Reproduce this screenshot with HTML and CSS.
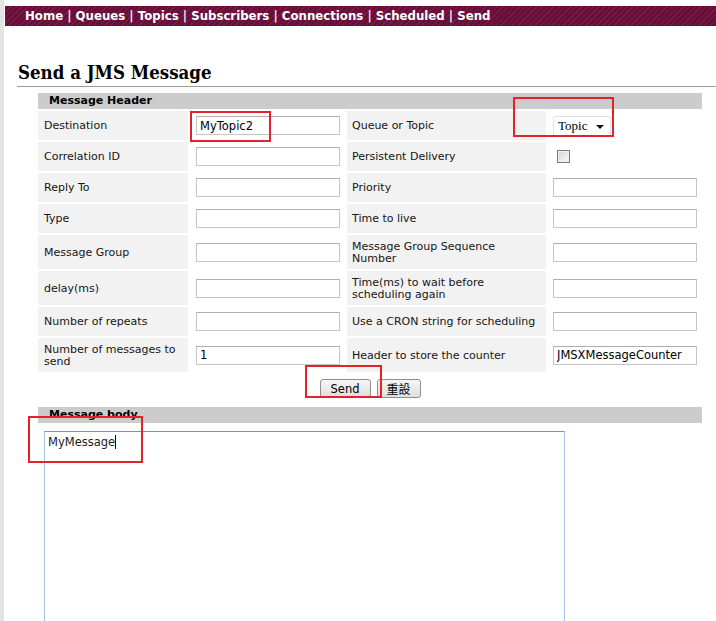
FILE: index.html
```html
<!DOCTYPE html>
<html>
<head>
<meta charset="utf-8">
<title>Send a JMS Message</title>
<link rel="stylesheet" href="styles.css">
</head>
<body>
<div class="page">
  <div class="topart"></div>
  <nav class="navbar">
    <a>Home</a> | <a>Queues</a> | <a>Topics</a> | <a>Subscribers</a> | <a>Connections</a> | <a>Scheduled</a> | <a>Send</a>
  </nav>
  <h2 class="title">Send a JMS Message</h2>
  <div class="rule"></div>

  <div class="form">
    <div class="bar">Message Header</div>
    <div class="grid">
      <div class="lbl">Destination</div>
      <div class="cell"><span class="mark-wrap"><input class="txt" value="MyTopic2"><span class="mark mark-dest"></span></span></div>
      <div class="lbl r">Queue or Topic</div>
      <div class="cell r"><span class="mark-wrap"><span class="select">Topic<span class="arrow"></span></span><span class="mark mark-topic"></span></span></div>

      <div class="lbl">Correlation ID</div>
      <div class="cell"><input class="txt"></div>
      <div class="lbl r">Persistent Delivery</div>
      <div class="cell r"><span class="check"></span></div>

      <div class="lbl">Reply To</div>
      <div class="cell"><input class="txt"></div>
      <div class="lbl r">Priority</div>
      <div class="cell r"><input class="txt"></div>

      <div class="lbl">Type</div>
      <div class="cell"><input class="txt"></div>
      <div class="lbl r">Time to live</div>
      <div class="cell r"><input class="txt"></div>

      <div class="lbl tall">Message Group</div>
      <div class="cell tall"><input class="txt"></div>
      <div class="lbl r tall">Message Group Sequence Number</div>
      <div class="cell r tall"><input class="txt"></div>

      <div class="lbl tall">delay(ms)</div>
      <div class="cell tall"><input class="txt"></div>
      <div class="lbl r tall">Time(ms) to wait before scheduling again</div>
      <div class="cell r tall"><input class="txt"></div>

      <div class="lbl">Number of repeats</div>
      <div class="cell"><input class="txt"></div>
      <div class="lbl r">Use a CRON string for scheduling</div>
      <div class="cell r"><input class="txt"></div>

      <div class="lbl tall">Number of messages to send</div>
      <div class="cell tall"><input class="txt" value="1"></div>
      <div class="lbl r tall">Header to store the counter</div>
      <div class="cell r tall"><input class="txt" value="JMSXMessageCounter"></div>
    </div>

    <div class="buttons">
      <span class="mark-wrap"><button class="btn btn-send">Send</button><span class="mark mark-send"></span></span>
      <button class="btn btn-reset">重設</button>
    </div>

    <div class="bar">Message body</div>
    <div class="body-area">
      <span class="mark-wrap"><span class="textarea"><span class="typed">MyMessage</span><span class="caret"></span></span><span class="mark mark-body"></span></span>
    </div>
  </div>
</div>
</body>
</html>
```

FILE: styles.css
```css
* { box-sizing: border-box; }
html, body { margin: 0; padding: 0; background: #fff; }
body { font-family: "DejaVu Sans", Verdana, sans-serif; font-size: 11px; color: #111; }

.page {
  min-height: 621px;
  border-style: solid;
  border-width: 0 0 0 4px;
  border-image: linear-gradient(to right, #e4e4e4, #b9b9b9, #d6d6d6) 1;
  overflow: hidden;
}

.topart { height: 6px; }

.navbar {
  margin-left: 1px;
  height: 20px;
  padding-left: 20px;
  line-height: 21px;
  font-size: 11.75px;
  font-weight: bold;
  color: #f2e6ec;
  white-space: nowrap;
  background-color: #6a0e39;
  background-image: repeating-linear-gradient(135deg, rgba(255,255,255,0.07) 0 1px, transparent 1px 4px);
}
.navbar a { color: #fff; }

.title {
  font-family: "DejaVu Serif Condensed", "DejaVu Serif", Georgia, serif;
  font-size: 18.5px;
  font-weight: bold;
  margin: 35px 0 0 14px;
  line-height: 24px;
  height: 24px;
  color: #000;
}
.rule {
  margin: 1px 0 0 13px;
  height: 1px;
  background: #9a9a9a;
}

.form {
  margin: 6px 0 0 34px;
  width: 664px;
}

.bar {
  height: 16px;
  background: #cccccc;
  font-weight: bold;
  padding-left: 11px;
  line-height: 16px;
  color: #000;
}

.grid {
  margin-top: 2px;
  display: grid;
  grid-template-columns: 150px 155px 199px 154px;
  column-gap: 2px;
  row-gap: 2px;
}
.lbl {
  background: #f2f2f2;
  height: 29px;
  padding: 1px 6px 0;
  display: flex;
  align-items: center;
  line-height: 12px;
  color: #151515;
}
.lbl.r { padding-left: 5px; }
.lbl.tall, .cell.tall { height: 34px; }
.cell {
  height: 29px;
  padding-left: 6px;
  display: flex;
  align-items: center;
}
.cell.r { padding-left: 5px; }

.txt {
  width: 144px;
  height: 19px;
  border: 1px solid #c6c6c6;
  border-top-color: #aeaeae;
  padding: 0 3px;
  margin: 0;
  font-family: "DejaVu Sans", Verdana, sans-serif;
  font-size: 11.5px;
  color: #000;
  background: #fff;
  outline: none;
}

.select {
  display: inline-flex;
  align-items: center;
  width: 58px;
  height: 20px;
  border: 1px solid #e2e2e2;
  border-radius: 2px;
  padding-left: 4px;
  font-family: "Liberation Serif", "Times New Roman", serif;
  font-size: 13px;
  color: #000;
  background: #fff;
  position: relative;
}
.arrow {
  position: absolute;
  right: 6px;
  top: 8px;
  width: 0; height: 0;
  border-left: 4px solid transparent;
  border-right: 4px solid transparent;
  border-top: 4px solid #111;
}

.check {
  display: inline-block;
  width: 13px;
  height: 13px;
  margin-left: 4px;
  border: 1px solid #7b7b7b;
  background: linear-gradient(135deg, #d6d6d6, #f8f8f8);
  box-shadow: inset 0 0 0 1px #eee;
}

.buttons {
  display: flex;
  justify-content: center;
  gap: 6px;
  padding-top: 7px;
  height: 35px;
}
.btn {
  height: 19px;
  margin: 0;
  border: 1px solid #8e8e8e;
  border-radius: 3px;
  background: linear-gradient(#f6f6f6, #dedede);
  font-size: 12px;
  padding: 0;
  color: #000;
}
.btn-send { width: 51px; font-family: "DejaVu Sans", Verdana, sans-serif; font-size: 11.5px; }
.btn-reset { width: 44px; font-family: "Noto Sans CJK TC", sans-serif; font-size: 12px; line-height: 15px; }

.body-area { padding: 8px 0 0 6px; }
.textarea {
  display: block;
  width: 521px;
  height: 200px;
  border: 1px solid #a9c7e4;
  border-top-color: #6e96be;
  padding: 3px 3px;
  font-size: 11.5px;
  line-height: 14px;
  color: #222;
}
.caret {
  display: inline-block;
  width: 1px;
  height: 14px;
  background: #000;
  vertical-align: top;
}

.mark-wrap { position: relative; display: inline-block; }
.mark {
  position: absolute;
  border: 2px solid #e3222e;
  pointer-events: none;
}
.mark-dest { left: -6px; top: -5px; width: 81px; height: 31px; }
.mark-topic { left: -40px; top: -19px; width: 101px; height: 40px; }
.mark-send { left: -15px; top: -14px; width: 77px; height: 33px; }
.mark-body { left: -16px; top: -15px; width: 115px; height: 47px; }
```
